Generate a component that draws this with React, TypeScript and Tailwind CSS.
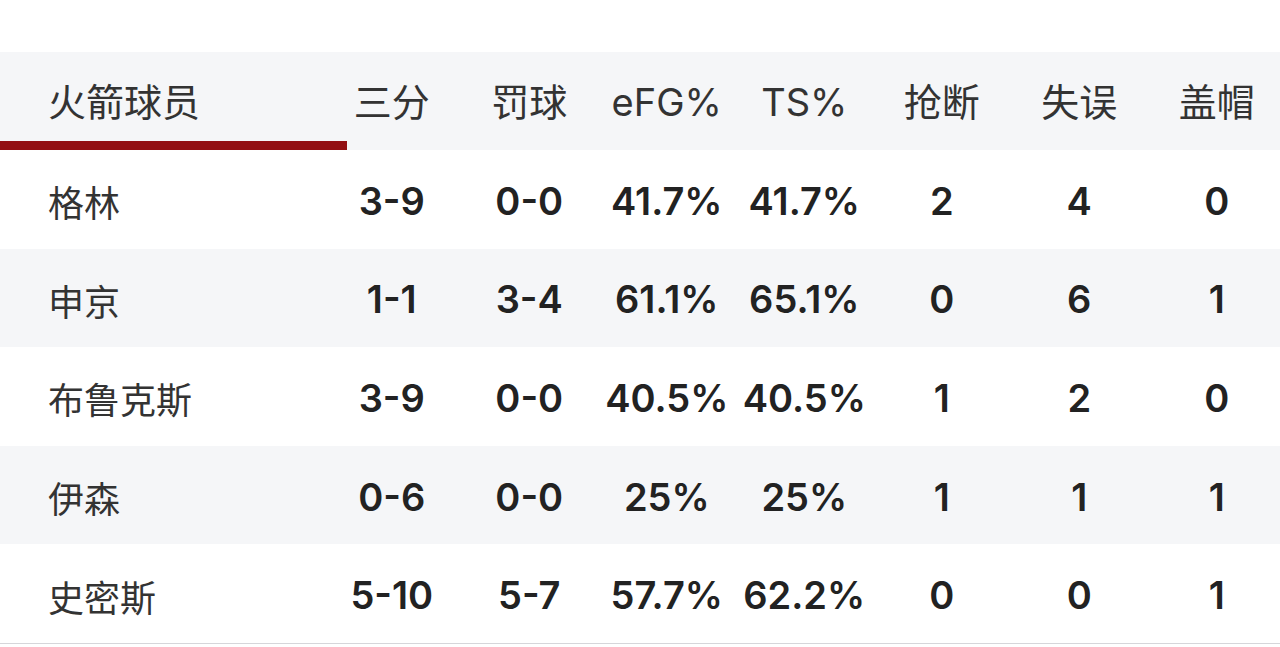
const headers = ['三分', '罚球', 'eFG%', 'TS%', '抢断', '失误', '盖帽'];

const players = [
  { name: '格林', stats: ['3-9', '0-0', '41.7%', '41.7%', '2', '4', '0'] },
  { name: '申京', stats: ['1-1', '3-4', '61.1%', '65.1%', '0', '6', '1'] },
  { name: '布鲁克斯', stats: ['3-9', '0-0', '40.5%', '40.5%', '1', '2', '0'] },
  { name: '伊森', stats: ['0-6', '0-0', '25%', '25%', '1', '1', '1'] },
  { name: '史密斯', stats: ['5-10', '5-7', '57.7%', '62.2%', '0', '0', '1'] },
];

const font = "font-['Inter','Noto_Sans_CJK_SC',sans-serif]";

const App = () => {
  return (
    <div className={`w-[1280px] h-[647px] bg-white overflow-hidden ${font}`}>
      <div className="h-[52px]" />
      <div className="grid grid-cols-[323px_repeat(7,137.5px)] h-[98px] bg-[#f5f6f8] text-[#333]">
        <div className="relative flex items-center pl-[48px] pt-[3px] text-[38px]">
          火箭球员
          <div className="absolute left-0 bottom-0 w-[347px] h-[9px] bg-[#930f13]" />
        </div>
        {headers.map((h) => (
          <div key={h} className="flex items-center justify-center pt-[3px] text-[38px] whitespace-nowrap">
            {h}
          </div>
        ))}
      </div>
      {players.map((p, i) => (
        <div
          key={p.name}
          className={`grid grid-cols-[323px_repeat(7,137.5px)] h-[98.6px] ${i % 2 === 1 ? 'bg-[#f5f6f8]' : 'bg-white'}`}
        >
          <div className="flex items-center pl-[48px] pt-[10px] text-[36px] text-[#333]">{p.name}</div>
          {p.stats.map((s, j) => (
            <div
              key={j}
              className="flex items-center justify-center pt-[4px] text-[38px] font-semibold text-[#222] whitespace-nowrap"
            >
              {s}
            </div>
          ))}
        </div>
      ))}
      <div className="h-px bg-[#d6d6da]" />
    </div>
  );
};

export default App;
